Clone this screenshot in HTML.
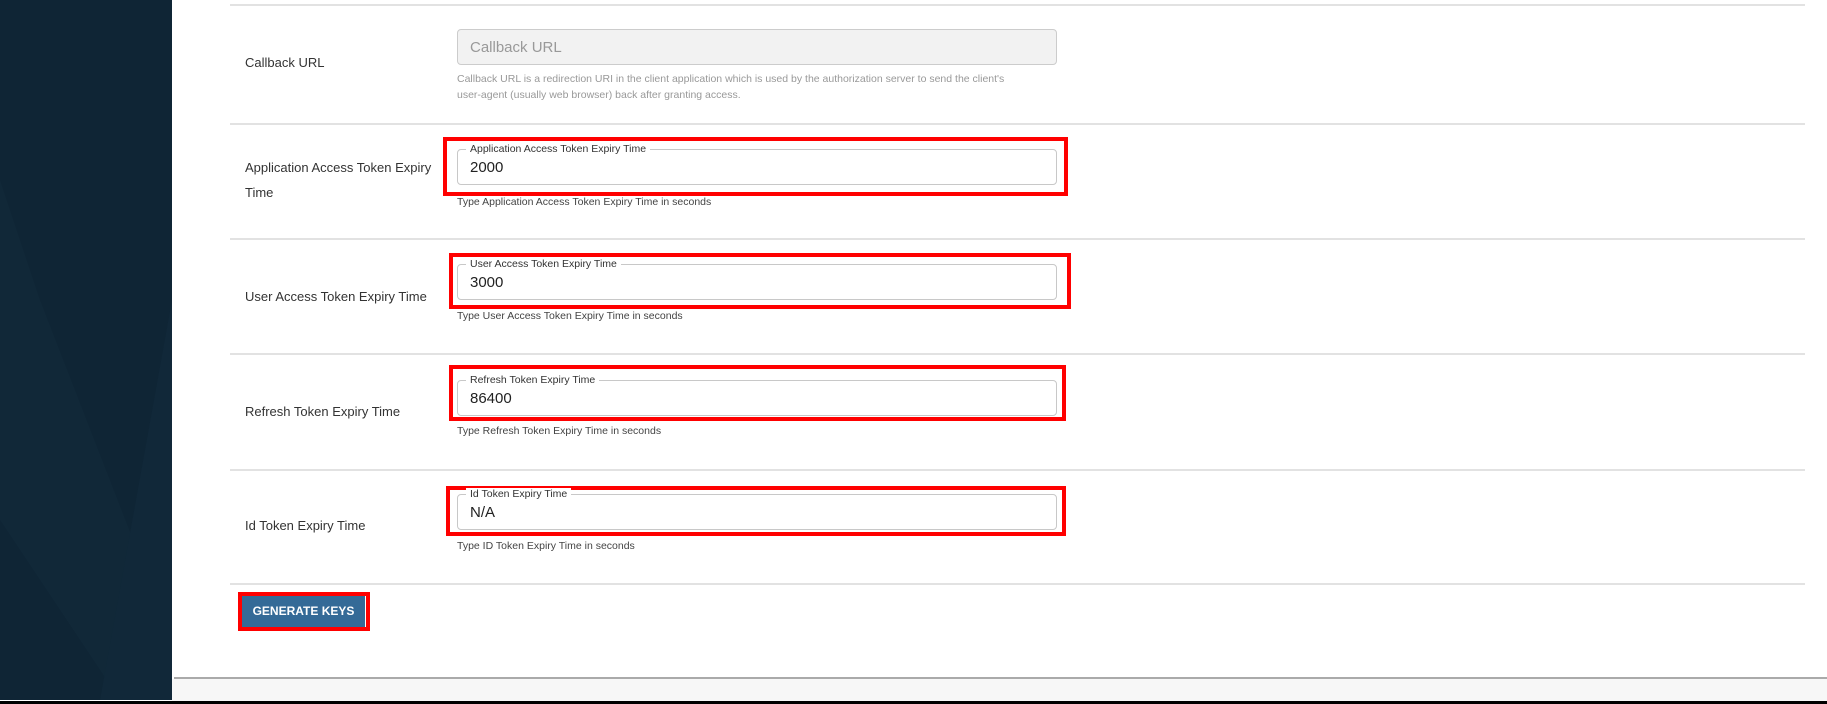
<!DOCTYPE html>
<html><head><style>
*{margin:0;padding:0;box-sizing:border-box}
body{width:1827px;height:704px;position:relative;overflow:hidden;background:#fff;font-family:"Liberation Sans",sans-serif;color:#333}
.a{position:absolute}
.sb{left:0;top:0;width:172px;height:700px;background:#0f2535}
.hr{left:230px;width:1575px;height:2px;background:#e2e2e2}
.lbl{font-size:13px;color:#333;left:245px;line-height:25px}
.red{border:4px solid #f00}
.in{left:457px;width:600px;height:36px;border:1px solid #c8c8c8;border-radius:4px;background:#fff}
.in .lg{position:absolute;left:8px;top:-7px;background:#fff;padding:0 4px;font-size:10.5px;color:#333;line-height:12px}
.in .v{position:absolute;left:12px;top:9px;font-size:15px;color:#222}
.help{left:457px;font-size:10.5px;color:#444}
</style></head><body>
<div class="a sb"><svg width="172" height="700" style="position:absolute;left:0;top:0"><polygon points="0,180 0,520 120,700 172,700 172,640 40,300" fill="#142c3c" opacity=".5"/><polygon points="172,300 100,700 172,700" fill="#112839"/></svg></div>
<div class="a hr" style="top:4px"></div>

<div class="a lbl" style="top:50px">Callback URL</div>
<div class="a" style="left:457px;top:29px;width:600px;height:36px;border:1px solid #ccc;border-radius:4px;background:#f2f2f2"><span style="position:absolute;left:12px;top:9px;font-size:15px;color:#999">Callback URL</span></div>
<div class="a" style="left:457px;top:71px;font-size:10.5px;color:#999;line-height:16px">Callback URL is a redirection URI in the client application which is used by the authorization server to send the client's<br>user-agent (usually web browser) back after granting access.</div>
<div class="a hr" style="top:123px"></div>

<div class="a lbl" style="top:155px">Application Access Token Expiry<br>Time</div>
<div class="a red" style="left:443px;top:137px;width:625px;height:59px"></div>
<div class="a in" style="top:149px"><span class="lg">Application Access Token Expiry Time</span><span class="v">2000</span></div>
<div class="a help" style="top:196px">Type Application Access Token Expiry Time in seconds</div>
<div class="a hr" style="top:238px"></div>

<div class="a lbl" style="top:284px">User Access Token Expiry Time</div>
<div class="a red" style="left:449px;top:253px;width:622px;height:56px"></div>
<div class="a in" style="top:264px"><span class="lg">User Access Token Expiry Time</span><span class="v">3000</span></div>
<div class="a help" style="top:310px">Type User Access Token Expiry Time in seconds</div>
<div class="a hr" style="top:353px"></div>

<div class="a lbl" style="top:399px">Refresh Token Expiry Time</div>
<div class="a red" style="left:449px;top:365px;width:617px;height:56px"></div>
<div class="a in" style="top:380px"><span class="lg">Refresh Token Expiry Time</span><span class="v">86400</span></div>
<div class="a help" style="top:425px">Type Refresh Token Expiry Time in seconds</div>
<div class="a hr" style="top:469px"></div>

<div class="a lbl" style="top:513px">Id Token Expiry Time</div>
<div class="a red" style="left:446px;top:486px;width:620px;height:50px"></div>
<div class="a in" style="top:494px"><span class="lg">Id Token Expiry Time</span><span class="v">N/A</span></div>
<div class="a help" style="top:540px">Type ID Token Expiry Time in seconds</div>
<div class="a hr" style="top:583px"></div>

<div class="a red" style="left:238px;top:592px;width:132px;height:39px"></div>
<div class="a" style="left:242px;top:596px;width:123px;height:31px;background:#346a97;color:#fff;font-weight:bold;font-size:12px;text-align:center;line-height:31px">GENERATE KEYS</div>

<div class="a" style="left:174px;top:677px;width:1653px;height:2px;background:#aaa"></div>
<div class="a" style="left:172px;top:679px;width:1655px;height:22px;background:#f7f7f7"></div>
<div class="a" style="left:0;top:701px;width:1827px;height:3px;background:#000"></div>
</body></html>
